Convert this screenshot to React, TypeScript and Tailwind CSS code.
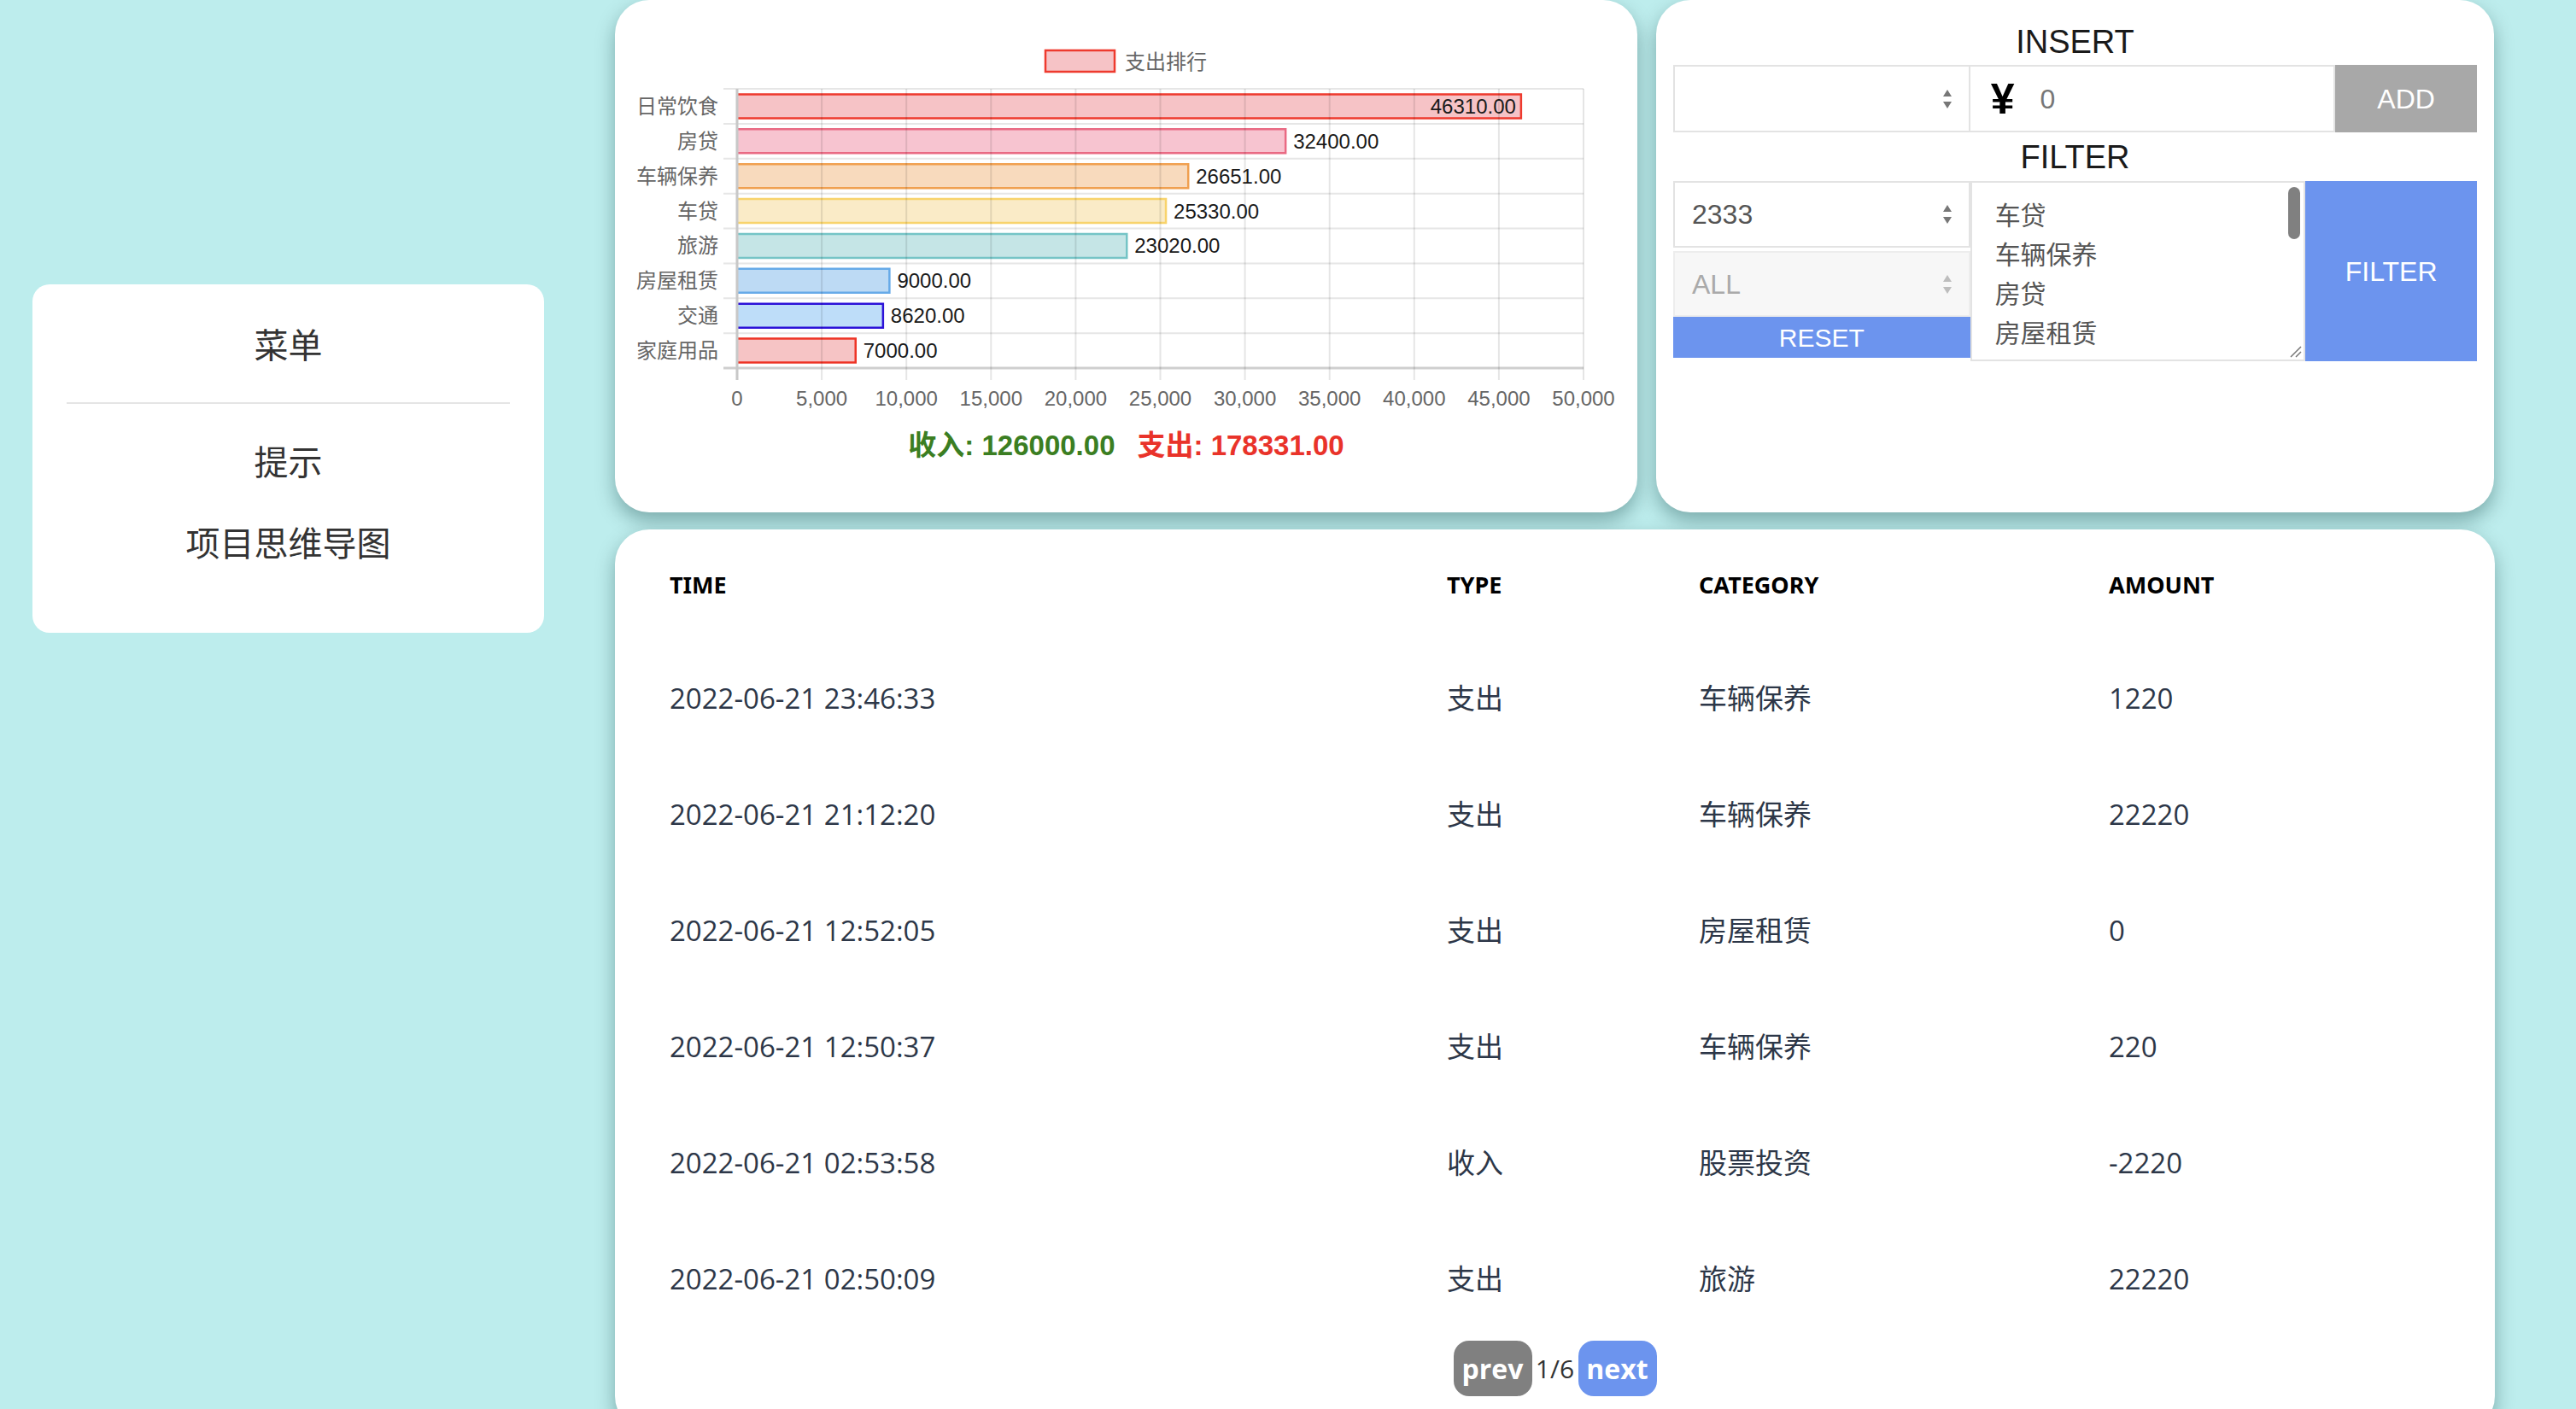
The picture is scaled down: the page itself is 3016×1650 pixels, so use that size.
import React from "react";

const cats = [
  { name: "日常饮食", v: 46310, fill: "#F6C3C6", stroke: "#EE3A2E" },
  { name: "房贷", v: 32400, fill: "#F7C4D0", stroke: "#E96A83" },
  { name: "车辆保养", v: 26651, fill: "#F8DABD", stroke: "#F0A050" },
  { name: "车贷", v: 25330, fill: "#FAEBC7", stroke: "#F8D36C" },
  { name: "旅游", v: 23020, fill: "#C5E5E6", stroke: "#75C4C6" },
  { name: "房屋租赁", v: 9000, fill: "#BDDAF4", stroke: "#66AAE8" },
  { name: "交通", v: 8620, fill: "#BEDDF9", stroke: "#2C12D8" },
  { name: "家庭用品", v: 7000, fill: "#F6C4C5", stroke: "#EE3426" },
];

const rows = [
  ["2022-06-21 23:46:33", "支出", "车辆保养", "1220"],
  ["2022-06-21 21:12:20", "支出", "车辆保养", "22220"],
  ["2022-06-21 12:52:05", "支出", "房屋租赁", "0"],
  ["2022-06-21 12:50:37", "支出", "车辆保养", "220"],
  ["2022-06-21 02:53:58", "收入", "股票投资", "-2220"],
  ["2022-06-21 02:50:09", "支出", "旅游", "22220"],
];

const X0 = 143;
const XW = 991;
const Y0 = 104;
const RH = 40.875;
const BAR = 28;

const Chart = () => {
  const ticks = Array.from({ length: 11 }, (_, k) => k);
  return (
    <svg width="1197" height="490" className="block">
      {/* legend */}
      <rect x="504" y="59" width="81" height="25" fill="#F6C3C6" stroke="#EE3A2E" strokeWidth="2.5" />
      <text x="597" y="72" dominantBaseline="central" fontSize="24" fill="#666">
        支出排行
      </text>

      {/* horizontal grid */}
      {Array.from({ length: 9 }, (_, i) => (
        <line
          key={i}
          x1="127"
          x2="1134"
          y1={Y0 + i * RH}
          y2={Y0 + i * RH}
          stroke={i === 8 ? "#CFCFCF" : "#E6E6E6"}
          strokeWidth={i === 8 ? 3 : 2}
        />
      ))}

      {/* bars */}
      {cats.map((c, i) => {
        const y = Y0 + i * RH + (RH - BAR) / 2;
        const w = (c.v / 50000) * XW;
        const end = X0 + w;
        return (
          <g key={c.name}>
            <rect x={X0} y={y} width={w} height={BAR} fill={c.fill} />
            <path
              d={`M${X0} ${y} H${end} V${y + BAR} H${X0}`}
              fill="none"
              stroke={c.stroke}
              strokeWidth="2.5"
            />
            <text
              x="121"
              y={y + BAR / 2}
              textAnchor="end"
              dominantBaseline="central"
              fontSize="24"
              fill="#666"
            >
              {c.name}
            </text>
            <text
              x={i === 0 ? end - 6 : end + 9}
              y={y + BAR / 2}
              textAnchor={i === 0 ? "end" : "start"}
              dominantBaseline="central"
              fontSize="24"
              fill="#1a1a1a"
            >
              {c.v.toFixed(2)}
            </text>
          </g>
        );
      })}

      {/* vertical grid */}
      {ticks.slice(1).map((k) => (
        <line
          key={k}
          x1={X0 + k * 99.1}
          x2={X0 + k * 99.1}
          y1={Y0}
          y2="445"
          stroke="rgba(0,0,0,0.1)"
          strokeWidth="2"
        />
      ))}
      <line x1={X0} x2={X0} y1={Y0} y2="445" stroke="#C8C8C8" strokeWidth="3" />

      {ticks.map((k) => (
        <text key={k} x={X0 + k * 99.1} y="466" textAnchor="middle" dominantBaseline="central" fontSize="24" fill="#666">
          {k === 0 ? "0" : (k * 5000).toLocaleString("en-US")}
        </text>
      ))}
    </svg>
  );
};

const Arrows = ({ light }: { light?: boolean }) => (
  <svg width="12" height="26" viewBox="0 0 12 26">
    <path d="M6 2 L11 10 H1 Z" fill={light ? "#BDBDBD" : "#777"} />
    <path d="M6 24 L11 16 H1 Z" fill={light ? "#BDBDBD" : "#777"} />
  </svg>
);

const App = () => {
  return (
    <div className="h-[1650px] w-full overflow-hidden bg-[#BDEDED] flex items-start font-['Liberation_Sans','Noto_Sans_CJK_SC',sans-serif]">
      {/* menu */}
      <aside className="ml-[38px] mt-[333px] w-[599px] bg-white rounded-[20px] pb-[60px] font-['Noto_Sans_CJK_SC',sans-serif] text-[#333] text-[40px]">
        <div className="h-[138px] flex items-center justify-center">菜单</div>
        <div className="mx-[40px] h-[2px] bg-[#E5E5E5]" />
        <div className="mt-[18px] h-[95px] flex items-center justify-center">提示</div>
        <div className="h-[95px] flex items-center justify-center">项目思维导图</div>
      </aside>

      <main className="ml-[83px] w-[2201px] flex flex-col gap-[20px]">
        <div className="flex gap-[22px]">
          {/* chart */}
          <section className="w-[1197px] h-[600px] bg-white rounded-[40px] shadow-[0_10px_22px_rgba(0,50,50,0.35)]">
            <Chart />
            <div className="h-[64px] flex items-center justify-center gap-[26px] text-[33px] font-bold">
              <span className="text-[#3B7E22]">收入: 126000.00</span>
              <span className="text-[#E9332A]">支出: 178331.00</span>
            </div>
          </section>

          {/* insert / filter */}
          <section className="w-[981px] h-[600px] bg-white rounded-[40px] px-[20px] shadow-[0_10px_22px_rgba(0,50,50,0.35)]">
            <div className="h-[76px] pt-[22px] flex items-center justify-center text-[38px] text-[#1a1a1a]">INSERT</div>
            <div className="flex h-[79px]">
              <div className="w-[348px] border-2 border-[#E3E3E3] flex items-center justify-end pr-[19px]">
                <Arrows />
              </div>
              <div className="w-[428px] border-2 border-l-0 border-[#E3E3E3] flex items-center pl-[24px]">
                <span className="text-[50px] leading-none font-black text-black">¥</span>
                <span className="ml-[30px] text-[32px] text-[#777]">0</span>
              </div>
              <button className="w-[166px] bg-[#A8A8A8] text-white text-[32px]">ADD</button>
            </div>
            <div className="h-[57px] pt-[2px] flex items-center justify-center text-[38px] text-[#1a1a1a]">FILTER</div>
            <div className="flex h-[211px]">
              <div className="w-[348px] flex flex-col">
                <div className="h-[78px] border-2 border-[#E3E3E3] flex items-center justify-between pl-[20px] pr-[19px] text-[32px] text-[#555]">
                  <span>2333</span>
                  <Arrows />
                </div>
                <div className="mt-[4px] h-[77px] border-2 border-[#EDEDED] bg-[#F7F7F7] flex items-center justify-between pl-[20px] pr-[19px] text-[32px] text-[#AAA]">
                  <span>ALL</span>
                  <Arrows light />
                </div>
                <button className="h-[48px] bg-[#6C94EE] text-white text-[30px]">RESET</button>
              </div>
              <div className="relative w-[393px] h-[211px] border-2 border-[#E3E3E3] overflow-hidden pl-[27px] pt-[13px] font-['Noto_Sans_CJK_SC',sans-serif] text-[30px] text-[#555]">
                {["车贷", "车辆保养", "房贷", "房屋租赁", "家庭用品"].map((t) => (
                  <div key={t} className="h-[46px] leading-[46px]">
                    {t}
                  </div>
                ))}
                <div className="absolute right-[4px] top-[5px] w-[14px] h-[61px] rounded-full bg-[#808080]" />
                <svg className="absolute right-[2px] bottom-[2px]" width="16" height="16" viewBox="0 0 16 16">
                  <path d="M15 3 L3 15 M15 9 L9 15" stroke="#777" strokeWidth="1.5" />
                </svg>
              </div>
              <button className="w-[201px] h-[211px] bg-[#6C94EE] text-white text-[32px]">FILTER</button>
            </div>
          </section>
        </div>

        {/* table */}
        <section className="w-[2201px] bg-white rounded-[40px] px-[64px] pb-[40px] shadow-[0_10px_22px_rgba(0,50,50,0.35)]">
          <table className="w-full table-fixed text-left">
            <colgroup>
              <col className="w-[910px]" />
              <col className="w-[295px]" />
              <col className="w-[480px]" />
              <col />
            </colgroup>
            <thead>
              <tr className="h-[130px] font-['Noto_Sans',sans-serif] font-black text-[27px] text-black">
                <th>TIME</th>
                <th>TYPE</th>
                <th>CATEGORY</th>
                <th>AMOUNT</th>
              </tr>
            </thead>
            <tbody className="font-['Open_Sans','Noto_Sans_CJK_SC',sans-serif] text-[33px] text-[#2D3748]">
              {rows.map((r) => (
                <tr key={r[0]} className="h-[136px]">
                  {r.map((c, j) => (
                    <td key={j}>{c}</td>
                  ))}
                </tr>
              ))}
            </tbody>
          </table>
          <div className="mt-[4px] flex items-center justify-center font-['Open_Sans',sans-serif]">
            <button className="w-[92px] h-[65px] rounded-[18px] bg-[#808080] text-white font-bold text-[32px]">prev</button>
            <span className="w-[54px] text-center text-[30px] text-[#333]">1/6</span>
            <button className="w-[92px] h-[65px] rounded-[18px] bg-[#6C94EE] text-white font-bold text-[32px]">next</button>
          </div>
        </section>
      </main>
    </div>
  );
};

export default App;
